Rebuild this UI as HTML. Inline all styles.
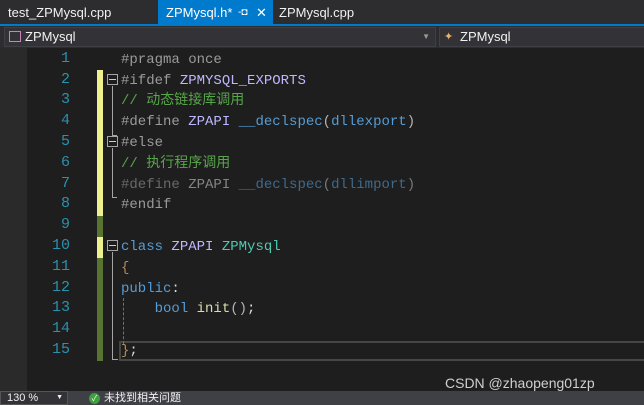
<!DOCTYPE html>
<html><head><meta charset="utf-8"><style>
*{margin:0;padding:0;box-sizing:border-box}
body{width:644px;height:405px;background:#1e1e1e;overflow:hidden;position:relative;font-family:"Liberation Sans","Noto Sans CJK SC",sans-serif}
.tabs{position:absolute;left:0;top:0;width:644px;height:25px;background:#2d2d30;font-size:13px;color:#f1f1f1}
.tab{position:absolute;top:0;height:24px;line-height:25px;padding-left:8px;white-space:nowrap;overflow:hidden}
.tabline{position:absolute;left:0;top:24px;width:644px;height:2px;background:#007acc}
.nav{position:absolute;left:0;top:26px;width:644px;height:22px;background:#2d2d30;font-size:13px;color:#f1f1f1}
.box{position:absolute;top:1px;height:20px;border:1px solid #3f3f46;background:#333337;line-height:18px}
.gut{position:absolute;left:0;top:48px;width:27px;height:343px;background:#2a2a2b}
.ln{position:absolute;left:27px;width:43px;text-align:right;font-family:"Liberation Mono",monospace;font-size:15px;line-height:18px;color:#2b91af}
.code{position:absolute;left:121px;font-family:"Liberation Mono","Noto Sans CJK SC",monospace;font-size:14px;line-height:18px;height:18px;color:#dcdcdc;white-space:pre}
.bar{position:absolute;left:97px;width:6px}
.pp{color:#9b9b9b}.mac2{color:#beb7ff}.cm{color:#57a64a}.kw{color:#569cd6}.ty{color:#4ec9b0}.fn{color:#dcdcaa}.pa{color:#b4b4b4}
.dim{opacity:.6}
.status{position:absolute;left:0;top:391px;width:644px;height:14px;background:#3f3f46}
</style></head><body>
<div class="tabs">
<div class="tab" style="left:0">test_ZPMysql.cpp</div>
<div class="tab" style="left:158px;width:115px;background:#007acc;color:#fff">ZPMysql.h*<span style="position:absolute;left:80px;top:0;font-size:10px">-◘</span><span style="position:absolute;left:98px;top:0">✕</span></div>
<div class="tab" style="left:271px">ZPMysql.cpp</div>
<div class="tabline"></div>
</div>
<div class="nav">
<div class="box" style="left:4px;width:432px"><span style="display:inline-block;width:12px;height:11px;border:1px solid #c586c0;margin:3px 4px 0 4px;vertical-align:top"></span>ZPMysql<span style="position:absolute;right:5px;color:#999;font-size:8px">▼</span></div>
<div class="box" style="left:439px;width:210px;padding-left:20px"><span style="position:absolute;left:4px;top:0;color:#e8b56a;font-size:11px">✦</span>ZPMysql</div>
</div>
<div class="gut"></div>
<div class="bar" style="top:70px;height:146px;background:#eff18f"></div>
<div class="bar" style="top:216px;height:21px;background:#577430"></div>
<div class="bar" style="top:237px;height:21px;background:#eff18f"></div>
<div class="bar" style="top:258px;height:103px;background:#577430"></div>
<div style="position:absolute;left:119px;top:341px;width:525px;height:20px;border:2px solid #464646;border-right:none"></div>
<div style="position:absolute;left:107px;top:74px;width:11px;height:11px;border:1px solid #a5a5a5"></div><div style="position:absolute;left:109px;top:79px;width:7px;height:1px;background:#ccc"></div>
<div style="position:absolute;left:112px;top:86px;width:1px;height:50px;background:#a5a5a5"></div><div style="position:absolute;left:112px;top:135px;width:5px;height:1px;background:#a5a5a5"></div>
<div style="position:absolute;left:107px;top:136px;width:11px;height:11px;border:1px solid #a5a5a5"></div><div style="position:absolute;left:109px;top:141px;width:7px;height:1px;background:#ccc"></div>
<div style="position:absolute;left:112px;top:148px;width:1px;height:50px;background:#a5a5a5"></div><div style="position:absolute;left:112px;top:197px;width:5px;height:1px;background:#a5a5a5"></div>
<div style="position:absolute;left:107px;top:240px;width:11px;height:11px;border:1px solid #a5a5a5"></div><div style="position:absolute;left:109px;top:245px;width:7px;height:1px;background:#ccc"></div>
<div style="position:absolute;left:112px;top:252px;width:1px;height:108px;background:#a5a5a5"></div><div style="position:absolute;left:112px;top:359px;width:6px;height:1px;background:#a5a5a5"></div>
<div style="position:absolute;left:123px;top:298px;width:0;height:46px;border-left:1px dashed #707070"></div>

<div class="ln" style="top:50px">1</div><div class="ln" style="top:71px">2</div><div class="ln" style="top:91px">3</div><div class="ln" style="top:112px">4</div><div class="ln" style="top:133px">5</div><div class="ln" style="top:154px">6</div><div class="ln" style="top:175px">7</div><div class="ln" style="top:195px">8</div><div class="ln" style="top:216px">9</div><div class="ln" style="top:237px">10</div><div class="ln" style="top:258px">11</div><div class="ln" style="top:279px">12</div><div class="ln" style="top:299px">13</div><div class="ln" style="top:320px">14</div><div class="ln" style="top:341px">15</div>

<div class="code" style="top:51px"><span class="pp">#pragma once</span></div>
<div class="code" style="top:72px"><span class="pp">#ifdef</span> <span class="mac2">ZPMYSQL_EXPORTS</span></div>
<div class="code" style="top:92px"><span class="cm">// 动态链接库调用</span></div>
<div class="code" style="top:113px"><span class="pp">#define</span> <span class="mac2">ZPAPI</span> <span class="kw">__declspec</span><span class="pa">(</span><span class="kw">dllexport</span><span class="pa">)</span></div>
<div class="code" style="top:134px"><span class="pp">#else</span></div>
<div class="code" style="top:155px"><span class="cm">// 执行程序调用</span></div>
<div class="code dim" style="top:176px"><span class="pp">#define</span> <span style="color:#c8c8c8">ZPAPI</span> <span class="kw">__declspec</span><span class="pa">(</span><span class="kw">dllimport</span><span class="pa">)</span></div>
<div class="code" style="top:196px"><span class="pp">#endif</span></div>
<div class="code" style="top:238px"><span class="kw">class</span> <span class="mac2">ZPAPI</span> <span class="ty">ZPMysql</span></div>
<div class="code" style="top:259px"><span style="color:#b48a5a">{</span></div>
<div class="code" style="top:280px"><span class="kw">public</span>:</div>
<div class="code" style="top:300px">    <span class="kw">bool</span> <span class="fn">init</span><span class="pa">()</span>;</div>
<div class="code" style="top:342px"><span style="color:#b48a5a">}</span>;</div>

<div class="status">
<div style="position:absolute;left:0;top:0;width:68px;height:14px;background:#333337;border:1px solid #555;font-size:11px;color:#f1f1f1;line-height:12px;padding-left:6px">130 %<span style="position:absolute;right:4px;font-size:7px">▼</span></div>
<div style="position:absolute;left:89px;top:2px;width:11px;height:11px;border-radius:50%;background:#3fa03f;color:#fff;font-size:8px;line-height:11px;text-align:center">✓</div>
<div style="position:absolute;left:104px;top:0;font-size:11px;color:#f1f1f1;line-height:14px">未找到相关问题</div>
</div>
<div style="position:absolute;left:445px;top:375px;font-size:14px;line-height:16px;color:#d0d0d0">CSDN @zhaopeng01zp</div>
</body></html>
